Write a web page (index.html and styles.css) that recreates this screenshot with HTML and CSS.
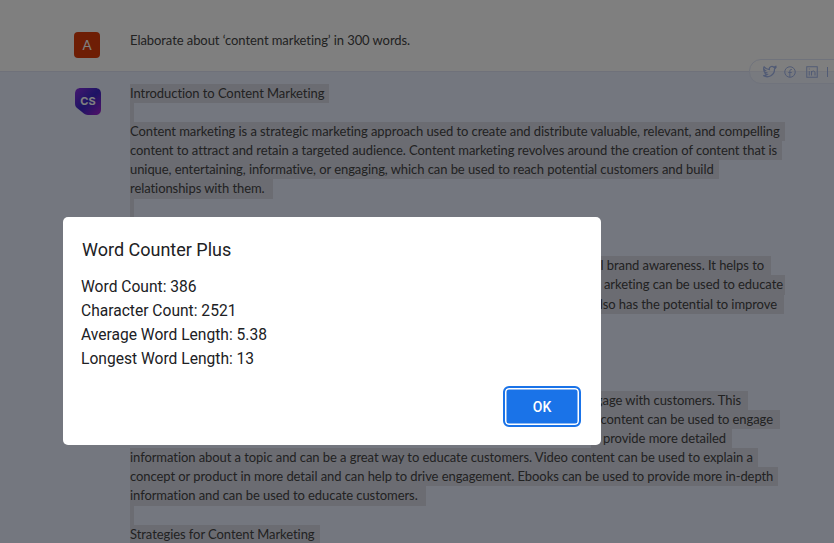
FILE: index.html
```html
<!DOCTYPE html>
<html lang="en">
<head>
<meta charset="utf-8">
<title>Word Counter Plus</title>
<link rel="stylesheet" href="styles.css">
</head>
<body>
<main class="chat">
  <section class="msg msg-user">
    <div class="avatar avatar-a">A</div>
    <p class="prompt">Elaborate about ‘content marketing’ in 300 words.</p>
  </section>
  <section class="msg msg-bot">
    <div class="avatar-cs">
      <svg viewBox="0 0 28 29" width="28" height="29" aria-hidden="true">
        <defs>
          <linearGradient id="csg" x1="0" y1="0" x2="1" y2="1">
            <stop offset="0" stop-color="#8a2fe0"/>
            <stop offset=".5" stop-color="#3a28c8"/>
            <stop offset="1" stop-color="#a522d0"/>
          </linearGradient>
        </defs>
        <path d="M7 1H21C25 1 27 3 27 7V22C27 26 25 28 21 28H14C12 28 10 27 8 25L3 21C1.500 20 1 18 1 16V7C1 3 3 1 7 1Z" fill="url(#csg)"/>
        <text x="14" y="18" text-anchor="middle" class="cs-text">CS</text>
      </svg>
    </div>
    <div class="answer">
      <div class="line"><span>Introduction to Content Marketing</span></div>
      <div class="line"><span class="blank"></span></div>
      <div class="line"><span>Content marketing is a strategic marketing approach used to create and distribute valuable, relevant, and compelling</span></div>
      <div class="line"><span>content to attract and retain a targeted audience. Content marketing revolves around the creation of content that is</span></div>
      <div class="line"><span>unique, entertaining, informative, or engaging, which can be used to reach potential customers and build</span></div>
      <div class="line"><span>relationships with them.&nbsp;</span></div>
      <div class="line"><span class="blank"></span></div>
      <div class="line"></div>
      <div class="line"></div>
      <div class="line tail to-771"><span>l brand awareness. It helps to</span></div>
      <div class="line tail to-785"><span>arketing can be used to educate</span></div>
      <div class="line tail to-784"><span>lso has the potential to improve</span></div>
      <div class="line"></div>
      <div class="line"></div>
      <div class="line"></div>
      <div class="line"></div>
      <div class="line tail to-748"><span>gage with customers. This</span></div>
      <div class="line tail to-780"><span>content can be used to engage</span></div>
      <div class="line tail to-732"><span>provide more detailed</span></div>
      <div class="line"><span>information about a topic and can be a great way to educate customers. Video content can be used to explain a</span></div>
      <div class="line"><span>concept or product in more detail and can help to drive engagement. Ebooks can be used to provide more in-depth</span></div>
      <div class="line"><span>information and can be used to educate customers.&nbsp;</span></div>
      <div class="line"><span class="blank"></span></div>
      <div class="line"><span>Strategies for Content Marketing</span></div>
    </div>
  </section>
</main>

<div class="share">
  <svg class="ico tw" viewBox="0 0 24 24" aria-hidden="true"><path d="M22 5.800c-.8.400-1.600.6-2.400.7.900-.5 1.500-1.300 1.800-2.300-.8.500-1.700.8-2.600 1a4.100 4.100 0 0 0-7 3.700C8.400 8.700 5.400 7.100 3.400 4.600c-1.100 1.900-.5 4.300 1.300 5.500-.7 0-1.300-.2-1.900-.5 0 2 1.400 3.700 3.300 4.100-.6.200-1.200.2-1.800.1.500 1.700 2 2.800 3.800 2.900A8.300 8.300 0 0 1 2 18.400 11.700 11.700 0 0 0 20 8c.8-.6 1.500-1.300 2-2.200Z"/></svg>
  <svg class="ico fb" viewBox="0 0 24 24" aria-hidden="true"><circle cx="12" cy="12" r="10.500"/><path d="M16 7h-1.500c-1.800 0-2.800 1-2.800 2.800V22.500M8.500 13h7"/></svg>
  <svg class="ico li" viewBox="0 0 24 24" aria-hidden="true"><rect x="1.500" y="1.500" width="21" height="21"/><path d="M6.500 10v9M6.500 5v2M11 19v-9M11 14c0-5 7-5.500 7-.5V19"/></svg>
  <i class="sep"></i>
</div>

<div class="scrim"></div>

<div class="dialog" role="alertdialog">
  <h1 class="dialog-title">Word Counter Plus</h1>
  <div class="dialog-body">
    <div>Word Count: 386</div>
    <div>Character Count: 2521</div>
    <div>Average Word Length: 5.38</div>
    <div>Longest Word Length: 13</div>
  </div>
  <div class="dialog-actions">
    <button class="ok" type="button">OK</button>
  </div>
</div>
</body>
</html>
```

FILE: styles.css
```css
* { box-sizing: border-box; }
html, body { margin: 0; height: 100%; overflow: hidden; }
body { background: #e8eeff; font-family: "Lato", "Liberation Sans", sans-serif; color: #444444; }

.chat { display: flex; flex-direction: column; height: 543px; overflow: hidden; }

.msg { display: flex; align-items: flex-start; padding-left: 74px; }
.msg-user { height: 72px; background: #ffffff; border-bottom: 1px solid #dfe3f5; padding-top: 32px; }
.msg-bot { flex: 1; padding-top: 11.500px; background: #e8eeff; overflow: hidden; }

.avatar { width: 26px; height: 26px; border-radius: 4px; flex: none; display: flex; align-items: center; justify-content: center; font-size: 13.500px; }
.avatar-a { background: #dc3d0a; color: #fff; }
.avatar-cs { width: 28px; height: 29px; margin-top: 3.500px; flex: none; }
.avatar-cs svg { display: block; }
.cs-text { font: 700 11px "Inter", "Open Sans", sans-serif; fill: #fff; }

.prompt { margin: 0 0 0 30px; font-size: 13px; letter-spacing: -.07px; line-height: 19.200px; position: relative; top: -1px; }
.answer { margin-left: 28px; font-size: 13px; letter-spacing: -.07px; line-height: 19.200px; white-space: nowrap; }
.line { height: 19.200px; }
.line span { display: inline-block; height: 19.200px; vertical-align: top; background: #d6d8e4; padding-right: 5px; }
.line .blank { width: 4px; padding: 0; }

.tail { display: flex; justify-content: flex-end; }
.tail span { padding-left: 12px; }
.to-771 { width: 641px; }
.to-771 span { padding-right: 7px; }
.to-785 { width: 655px; }
.to-785 span { padding-right: 2px; }
.to-784 { width: 654px; }
.to-784 span { padding-right: 7px; }
.to-748 { width: 618px; }
.to-748 span { padding-right: 7px; }
.to-780 { width: 650px; }
.to-780 span { padding-right: 7px; }
.to-732 { width: 602px; }
.to-732 span { padding-right: 6px; }

.share { position: absolute; left: 749px; top: 59px; width: 100px; height: 25px; display: flex; align-items: center; padding-left: 12px; border: 1px solid #e0e6f8; border-radius: 12px; background: rgba(255, 255, 255, .35); }
.ico { fill: none; stroke: #a3b6ea; stroke-width: 2; flex: none; display: block; }
.tw { width: 15px; height: 15px; }
.fb { width: 12px; height: 12px; margin-left: 7px; }
.li { width: 12px; height: 12px; margin-left: 10px; }
.sep { width: 1px; height: 10px; background: #a3b6ea; margin-left: 9px; }

.scrim { position: fixed; inset: 0; background: rgba(0, 0, 0, .5); }

.dialog { position: absolute; left: 63px; top: 217px; width: 538px; height: 228px; background: #fff; border-radius: 5px; color: #202124; font-family: "Roboto", "Liberation Sans", sans-serif; display: flex; flex-direction: column; padding: 22px 20px 18px 18px; }
.dialog-title { margin: 0 0 0 1px; font-size: 18px; font-weight: 400; line-height: 22px; }
.dialog-body { margin-top: 13.500px; font-size: 15.600px; line-height: 24px; }
.dialog-actions { margin-top: auto; display: flex; justify-content: flex-end; }
.ok { width: 78px; height: 41px; background: #1a73e8; color: #fff; border: 2px solid #1a73e8; box-shadow: inset 0 0 0 1.500px #fff; border-radius: 6px; font: 500 14px "Roboto", sans-serif; padding: 0; }
```
